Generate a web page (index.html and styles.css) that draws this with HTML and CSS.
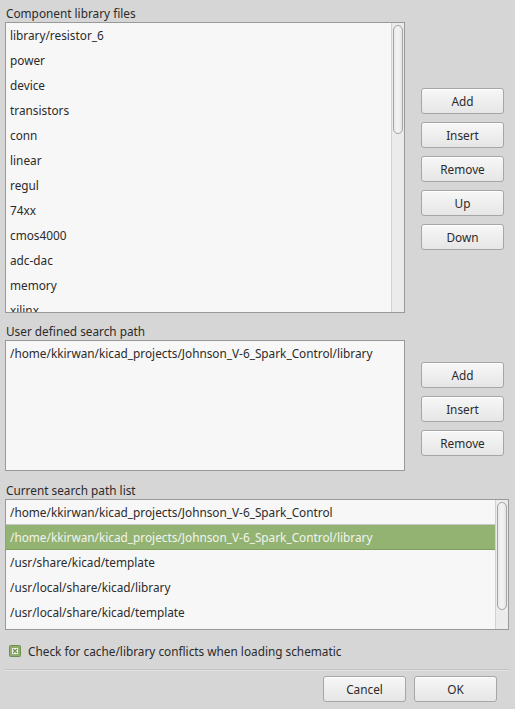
FILE: index.html
```html
<!DOCTYPE html>
<html>
<head>
<meta charset="utf-8">
<link rel="stylesheet" href="styles.css">
</head>
<body>
<div class="dialog">
  <div class="label">Component library files</div>
  <div class="row row-1">
    <div class="list list-1">
      <div class="items">
        <div class="item">library/resistor_6</div>
        <div class="item">power</div>
        <div class="item">device</div>
        <div class="item">transistors</div>
        <div class="item">conn</div>
        <div class="item">linear</div>
        <div class="item">regul</div>
        <div class="item">74xx</div>
        <div class="item">cmos4000</div>
        <div class="item">adc-dac</div>
        <div class="item">memory</div>
        <div class="item">xilinx</div>
      </div>
      <div class="scroll"><div class="thumb thumb-1"></div></div>
    </div>
    <div class="buttons">
      <button class="btn">Add</button>
      <button class="btn">Insert</button>
      <button class="btn">Remove</button>
      <button class="btn">Up</button>
      <button class="btn">Down</button>
    </div>
  </div>

  <div class="label label-2">User defined search path</div>
  <div class="row row-2">
    <div class="list list-2">
      <div class="items">
        <div class="item">/home/kkirwan/kicad_projects/Johnson_V-6_Spark_Control/library</div>
      </div>
    </div>
    <div class="buttons">
      <button class="btn">Add</button>
      <button class="btn">Insert</button>
      <button class="btn">Remove</button>
    </div>
  </div>

  <div class="label label-3">Current search path list</div>
  <div class="list list-3">
    <div class="items">
      <div class="item">/home/kkirwan/kicad_projects/Johnson_V-6_Spark_Control</div>
      <div class="item selected">/home/kkirwan/kicad_projects/Johnson_V-6_Spark_Control/library</div>
      <div class="item">/usr/share/kicad/template</div>
      <div class="item">/usr/local/share/kicad/library</div>
      <div class="item">/usr/local/share/kicad/template</div>
    </div>
    <div class="scroll"><div class="thumb thumb-3"></div></div>
  </div>

  <div class="check-row">
    <svg class="checkbox" width="12" height="12" viewBox="0 0 12 12">
      <rect x="0.5" y="0.5" width="11" height="11" rx="1" fill="#8fae6e" stroke="#6f8f50"/>
      <rect x="3" y="3" width="6" height="6" fill="#f4f4f4"/>
      <path d="M4 4 L8 8 M8 4 L4 8" stroke="#6f8f50" stroke-width="1.3"/>
    </svg>
    <span>Check for cache/library conflicts when loading schematic</span>
  </div>
  <div class="separator"></div>
  <div class="footer">
    <button class="btn">Cancel</button>
    <button class="btn">OK</button>
  </div>
</div>
</body>
</html>
```
FILE: styles.css
```css
html, body {
  margin: 0;
  padding: 0;
  background: #d6d6d6;
}
body {
  font-family: "Noto Sans", "Open Sans", sans-serif;
  font-size: 11.8px;
  color: #2b2b2b;
  width: 515px;
  height: 709px;
  overflow: hidden;
}
.dialog {
  padding: 5px 6px 0 5px;
}
.label {
  height: 17px;
  line-height: 17px;
  padding-left: 1px;
  white-space: nowrap;
}
.label-2 { margin-top: 10px; }
.label-3 { margin-top: 11px; }
.row {
  display: flex;
  align-items: stretch;
}
.list {
  position: relative;
  background: #f7f7f7;
  border: 1px solid #999;
  box-sizing: border-box;
  overflow: hidden;
  display: flex;
}
.list-1 { width: 400px; height: 291px; }
.list-2 { width: 400px; height: 131px; }
.list-3 { width: 504px; height: 131px; }
.items {
  flex: 1;
  overflow: hidden;
  min-width: 0;
}
.item {
  height: 25px;
  line-height: 25px;
  padding-left: 4px;
  white-space: nowrap;
  box-sizing: border-box;
}
.list-3 .item:first-child { border-bottom: 1px solid #c8c8c8; height: 25px; }
.item.selected {
  background: #93b373;
  color: #f2f4ee;
  border-bottom: 1px solid #7f9f60;
}
.scroll {
  width: 13px;
  flex: none;
  background: #ebebeb;
  border-left: 1px solid #d2d2d2;
  padding: 2px 1px 0 1px;
  box-sizing: border-box;
}
.thumb {
  width: 10px;
  border: 1px solid #a4a4a4;
  border-radius: 5px;
  box-sizing: border-box;
  background: linear-gradient(to right, #e9e9e9, #f4f4f4 50%, #e4e4e4);
}
.thumb-1 { height: 109px; }
.thumb-3 { height: 108px; }
.buttons {
  width: 83px;
  margin-left: 16px;
  display: flex;
  flex-direction: column;
  justify-content: center;
  gap: 8px;
  padding-top: 3px;
}
.row-2 .buttons { padding-top: 6px; }
.btn {
  font-family: "Noto Sans", "Open Sans", sans-serif;
  font-size: 11.8px;
  color: #2b2b2b;
  width: 83px;
  height: 26px;
  padding: 0;
  border: 1px solid #a6a6a6;
  border-radius: 3px;
  background: linear-gradient(to bottom, #f7f7f7, #e6e6e6);
  box-shadow: inset 0 1px 0 #ffffff;
}
.check-row {
  display: flex;
  align-items: center;
  height: 22px;
  margin-top: 10px;
  padding-left: 4px;
  gap: 7px;
}
.checkbox { flex: none; }
.separator {
  margin-top: 7px;
  height: 1px;
  background: #c2c2c2;
  box-shadow: 0 1px 0 #e2e2e2;
}
.footer {
  display: flex;
  justify-content: flex-end;
  gap: 8px;
  padding-top: 6px;
  padding-right: 12px;
}
```
